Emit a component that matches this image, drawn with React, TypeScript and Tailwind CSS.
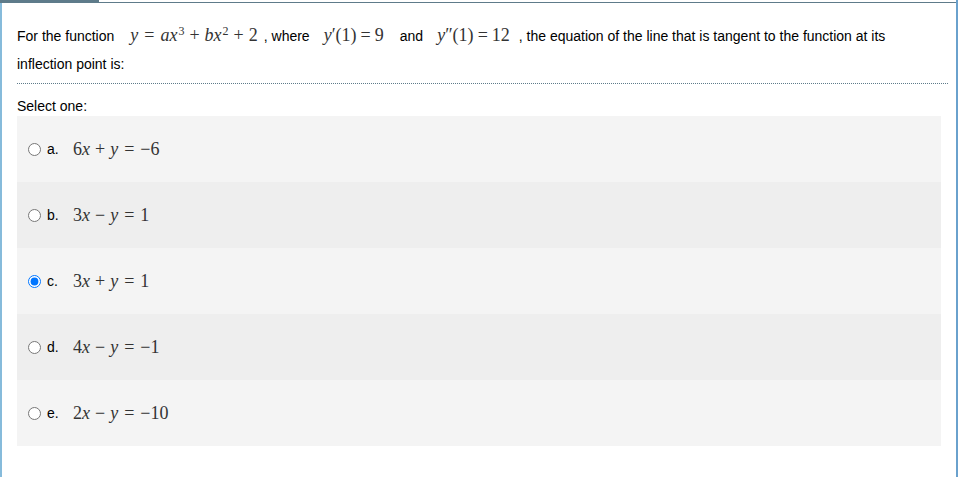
import React from "react";

const serif = { fontFamily: '"Liberation Serif", "DejaVu Serif", serif' };

// tiny helpers for the formula bits
const V = ({ children }: { children: React.ReactNode }) => <span className="italic">{children}</span>;
const Op = ({ children }: { children: React.ReactNode }) => <span className="mx-[5px]">{children}</span>;
const Rel = ({ children }: { children: React.ReactNode }) => <span className="mx-[6px]">{children}</span>;
const RelT = ({ children }: { children: React.ReactNode }) => <span className="mx-[4px]">{children}</span>;

const Math: React.FC<{ children: React.ReactNode; className?: string }> = ({ children, className = "" }) => (
  <span className={"inline-block whitespace-nowrap text-[18px] leading-none text-[#333] " + className} style={serif}>
    {children}
  </span>
);

type Choice = { key: string; checked?: boolean; expr: React.ReactNode };

const choices: Choice[] = [
  { key: "a", expr: <>6<V>x</V><Op>+</Op><V>y</V><Rel>=</Rel>−6</> },
  { key: "b", expr: <>3<V>x</V><Op>−</Op><V>y</V><Rel>=</Rel>1</> },
  { key: "c", checked: true, expr: <>3<V>x</V><Op>+</Op><V>y</V><Rel>=</Rel>1</> },
  { key: "d", expr: <>4<V>x</V><Op>−</Op><V>y</V><Rel>=</Rel>−1</> },
  { key: "e", expr: <>2<V>x</V><Op>−</Op><V>y</V><Rel>=</Rel>−10</> },
];

export default function App() {
  return (
    <div
      className="flex h-[477px] w-full overflow-hidden bg-white text-[14px] text-black"
      style={{ fontFamily: '"Liberation Sans", Arial, sans-serif' }}
    >
      <div className="flex flex-1 flex-col">
        <div className="flex h-[3px]">
          <div className="w-[99px] bg-[#5e7b8a]" />
          <div className="flex-1 border-b border-[#5e7b8a]" />
        </div>
        <div className="flex flex-1">
          <div className="w-[2px] bg-[#86bbdb]" />
          <div className="flex-1 pl-[15px] pr-[8px]">
            <div className="pt-[19px] leading-[28px]">
              For the function
              <Math className="ml-[16px] mr-[6px]">
                <V>y</V><Rel>=</Rel><V>a</V><V>x</V><sup className="ml-[1px] text-[12px]">3</sup><Op>+</Op><V>b</V><V>x</V><sup className="ml-[1px] text-[12px]">2</sup><Op>+</Op>2
              </Math>
              , where
              <Math className="ml-[14px] mr-[16px]">
                <V>y</V>′(1)<RelT>=</RelT>9
              </Math>
              and
              <Math className="ml-[14px] mr-[9px]">
                <V>y</V>″(1)<RelT>=</RelT>12
              </Math>
              , the equation of the line that is tangent to the function at its
              <br />
              inflection point is:
            </div>
            <div className="mt-[5px] border-b border-dotted border-[#5e7b8a]" />
            <div className="mt-[14px] leading-[17px]">Select one:</div>
            <div className="mt-[1px] mr-[7px]">
              {choices.map((c, i) => (
                <label
                  key={c.key}
                  className={
                    "flex h-[66px] items-center pl-[11px] " + (i % 2 === 0 ? "bg-[#f4f4f4]" : "bg-[#eeeeee]")
                  }
                >
                  <input
                    type="radio"
                    name="q1"
                    defaultChecked={c.checked}
                    className="m-0 h-[13px] w-[13px] accent-[#0075ff]"
                  />
                  <span className="ml-[6px] w-[26px]">{c.key}.</span>
                  <Math>{c.expr}</Math>
                </label>
              ))}
            </div>
          </div>
        </div>
      </div>
      <div className="w-[2px] bg-[#6aa1cd]" />
    </div>
  );
}
